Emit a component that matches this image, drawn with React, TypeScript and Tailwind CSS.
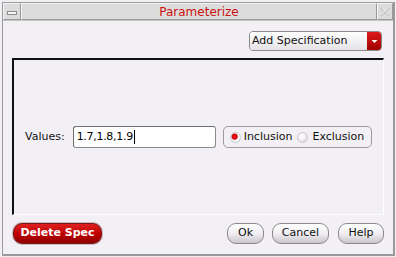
import React from "react";

const font = { fontFamily: '"DejaVu Sans", Verdana, sans-serif' };

function GrayButton({ label, w }: { label: string; w: string }) {
  return (
    <div
      className={`${w} h-[21px] flex items-center justify-center rounded-[9px] border border-[#8a8a8a] bg-gradient-to-b from-[#ffffff] via-[#f0eef2] to-[#c9c7cc] text-[11px] text-[#111] shadow-[inset_0_1px_0_#fff]`}
    >
      {label}
    </div>
  );
}

export default function App() {
  return (
    <div className="w-[396px] h-[257px] bg-[#f3f0f5] pl-[2px] pt-[2px] pr-[1px] pb-[1px]" style={font}>
      <div className="w-full h-full flex flex-col border-l border-t border-r-2 border-b-2 border-[#9a9a9a] bg-[#f3f0f5]">
        {/* title bar */}
        <div className="h-[18px] flex bg-[#dcdcdc] border-b border-[#c4c4c4]">
          <div className="w-[18px] h-full flex items-center justify-center border-t border-l border-[#f4f4f4] border-r border-b border-r-[#9a9a9a] border-b-[#9a9a9a]">
            <div className="w-[10px] h-[4px] bg-[#f6f6f6] border border-[#8c8c8c] mt-[2px]" />
          </div>
          <div className="flex-1 h-full flex items-center justify-center border-t border-l border-[#f4f4f4] border-r border-b border-r-[#9a9a9a] border-b-[#9a9a9a] text-[12px] text-[#cc1111]">
            Parameterize
          </div>
          <div className="w-[16px] h-full flex items-center justify-center border-t border-l border-[#f4f4f4] border-r border-b border-r-[#9a9a9a] border-b-[#9a9a9a]">
            <svg width="10" height="10" viewBox="0 0 10 10">
              <path d="M1 1 L9 9 M9 1 L1 9" stroke="#b8b8b8" strokeWidth="1.6" strokeDasharray="1.2 0.8" fill="none" />
              <path d="M2 1 L9 8 M8 1 L1 8" stroke="#ececec" strokeWidth="0.8" fill="none" />
            </svg>
          </div>
        </div>

        {/* content */}
        <div className="flex-1 flex flex-col pl-[9px] pr-[9px] pt-[10px]">
          {/* dropdown */}
          <div className="flex justify-end pr-[2px]">
            <div className="w-[133px] h-[20px] flex rounded-[4px] border border-[#8a8a8a] overflow-hidden">
              <div className="flex-1 flex items-center pl-[2px] text-[11px] text-[#111] bg-gradient-to-b from-[#ffffff] to-[#e4e2e6]">
                Add Specification
              </div>
              <div className="w-[14px] flex items-center justify-center bg-gradient-to-b from-[#dd1a1a] to-[#a00000]">
                <svg width="7" height="5" viewBox="0 0 7 5">
                  <path d="M0.5 1 L6.5 1 L3.5 4 Z" fill="#ffffff" />
                </svg>
              </div>
            </div>
          </div>

          {/* frame */}
          <div className="mt-[7px] h-[157px] border-t-2 border-l-2 border-[#111] border-r border-b border-r-[#ffffff] border-b-[#ffffff] flex items-center pl-[11px]">
            <div className="flex items-center">
              <span className="text-[11px] text-[#111]">Values:</span>
              <div className="ml-[8px] w-[143px] h-[22px] bg-white border border-[#8c8c8c] border-t-[#6e6e6e] border-l-[#6e6e6e] rounded-[3px] flex items-center pl-[3px]">
                <span className="text-[11px] text-[#000] tracking-[-0.3px]">1.7,1.8,1.9</span>
                <span className="w-[1px] h-[14px] bg-black ml-[1px]" />
              </div>
              <div className="ml-[7px] w-[149px] h-[22px] border border-[#9a9a9a] rounded-[5px] flex items-center pl-[6px] text-[11px] text-[#111]">
                <span className="w-[11px] h-[11px] rounded-full bg-[radial-gradient(circle_at_40%_40%,#ff2020_0%,#d00000_35%,#e8e6ea_45%,#ffffff_60%,#c8c6ca_100%)] border border-[#c8c6cc]" />
                <span className="ml-[3px]">Inclusion</span>
                <span className="ml-[5px] w-[11px] h-[11px] rounded-full bg-[radial-gradient(circle_at_40%_35%,#ffffff_0%,#f2f0f4_45%,#c8c6cb_100%)] border border-[#c8c6cc]" />
                <span className="ml-[4px]">Exclusion</span>
              </div>
            </div>
          </div>

          {/* buttons */}
          <div className="mt-[8px] flex items-center">
            <div className="ml-[1px] w-[89px] h-[21px] flex items-center justify-center rounded-[9px] border border-[#7a1a1a] bg-gradient-to-b from-[#e02020] via-[#c00000] to-[#900000] text-[11px] font-bold text-white shadow-[0_0_0_1px_#c8b8bc]">
              Delete Spec
            </div>
            <div className="flex-1" />
            <GrayButton label="Ok" w="w-[37px]" />
            <div className="w-[8px]" />
            <GrayButton label="Cancel" w="w-[57px]" />
            <div className="w-[9px]" />
            <GrayButton label="Help" w="w-[46px]" />
          </div>
        </div>
      </div>
    </div>
  );
}
